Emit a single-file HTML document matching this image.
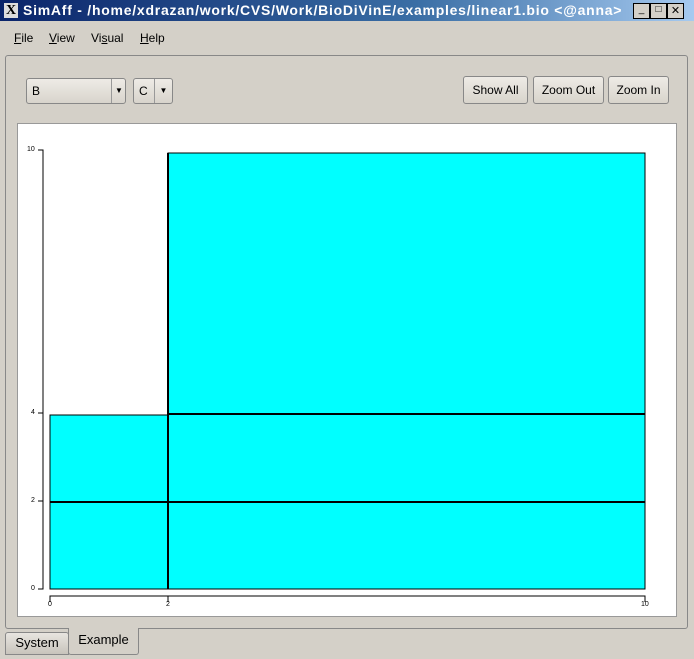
<!DOCTYPE html><html><head><style>
body{margin:0;width:694px;height:659px;background:#d4d0c8;font-family:"Liberation Sans",sans-serif;font-size:12px;position:relative;overflow:hidden}
.a{position:absolute}
.btn{position:absolute;border:1px solid #888;border-radius:3px;background:linear-gradient(#eeebe6,#d8d4cc);text-align:center;line-height:24px;height:24px;color:#000;font-size:12px}
.t{font-size:7px;position:absolute}
</style></head><body>
<div class="a" style="left:0;top:0;width:694px;height:21px;background:linear-gradient(90deg,#0a246a,#3a6ea5 60%,#a6caf0)"></div>
<div class="a" style="left:4px;top:3px;width:14px;height:15px;background:#ddd;font:bold 14px 'Liberation Serif';line-height:15px;text-align:center">X</div>
<div class="a" style="left:23px;top:2px;color:#fff;font-weight:bold;font-size:14px;letter-spacing:0.75px;white-space:nowrap">SimAff - /home/xdrazan/work/CVS/Work/BioDiVinE/examples/linear1.bio &lt;@anna&gt;</div>
<div class="a" style="left:633px;top:3px;width:15px;height:14px;background:#d4d0c8;border:1px solid #000;font-size:10px;text-align:center">_</div>
<div class="a" style="left:650px;top:3px;width:15px;height:14px;background:#d4d0c8;border:1px solid #000;font-size:10px;text-align:center">□</div>
<div class="a" style="left:667px;top:3px;width:15px;height:14px;background:#d4d0c8;border:1px solid #000;font-size:11px;text-align:center">✕</div>
<div class="a" style="left:14px;top:31px"><u>F</u>ile</div>
<div class="a" style="left:49px;top:31px"><u>V</u>iew</div>
<div class="a" style="left:91px;top:31px">Vi<u>s</u>ual</div>
<div class="a" style="left:140px;top:31px"><u>H</u>elp</div>
<div class="a" style="left:5px;top:55px;width:681px;height:572px;border:1px solid #888;border-radius:3px"></div>
<div class="btn" style="left:26px;top:78px;width:98px;text-align:left;padding-left:0"><span style="margin-left:5px">B</span><span class="a" style="left:84px;top:0;border-left:1px solid #999;width:14px;text-align:center;font-size:8px">▼</span></div>
<div class="btn" style="left:133px;top:78px;width:38px;text-align:left"><span style="margin-left:5px">C</span><span class="a" style="left:20px;top:0;border-left:1px solid #999;width:17px;text-align:center;font-size:8px">▼</span></div>
<div class="btn" style="left:463px;top:76px;width:63px;height:26px;line-height:26px">Show All</div>
<div class="btn" style="left:533px;top:76px;width:69px;height:26px;line-height:26px">Zoom Out</div>
<div class="btn" style="left:608px;top:76px;width:59px;height:26px;line-height:26px">Zoom In</div>
<div class="a" style="left:17px;top:123px;width:658px;height:492px;background:#fff;border:1px solid #999"></div>
<svg class="a" style="left:0;top:0" width="694" height="659">
<rect x="50" y="415" width="118" height="174" fill="#0ff" stroke="#000"/>
<rect x="168" y="153" width="477" height="436" fill="#0ff" stroke="#000"/>
<g stroke="#000" stroke-width="2"><line x1="168" y1="153" x2="168" y2="589"/><line x1="168" y1="414" x2="645" y2="414"/><line x1="50" y1="502" x2="645" y2="502"/></g>
<g stroke="#000" fill="none"><path d="M38 150H43V589H38M38 413H43M38 501H43"/><path d="M50 602V596H645V602M168 596V602"/></g>
</svg>
<div class="t" style="left:27px;top:146px">10</div>
<div class="t" style="left:31px;top:409px">4</div>
<div class="t" style="left:31px;top:497px">2</div>
<div class="t" style="left:31px;top:585px">0</div>
<div class="t" style="left:48px;top:601px">0</div>
<div class="t" style="left:166px;top:601px">2</div>
<div class="t" style="left:641px;top:601px">10</div>
<div class="a" style="left:5px;top:632px;width:62px;height:21px;border:1px solid #888;border-radius:3px 3px 0 0;background:linear-gradient(#e8e5e0,#c8c4bc);text-align:center;line-height:20px;font-size:13px">System</div>
<div class="a" style="left:68px;top:628px;width:69px;height:26px;border:1px solid #888;border-top:none;border-radius:0 0 3px 3px;background:#d4d0c8;text-align:center;line-height:24px;font-size:13px">Example</div>
</body></html>
